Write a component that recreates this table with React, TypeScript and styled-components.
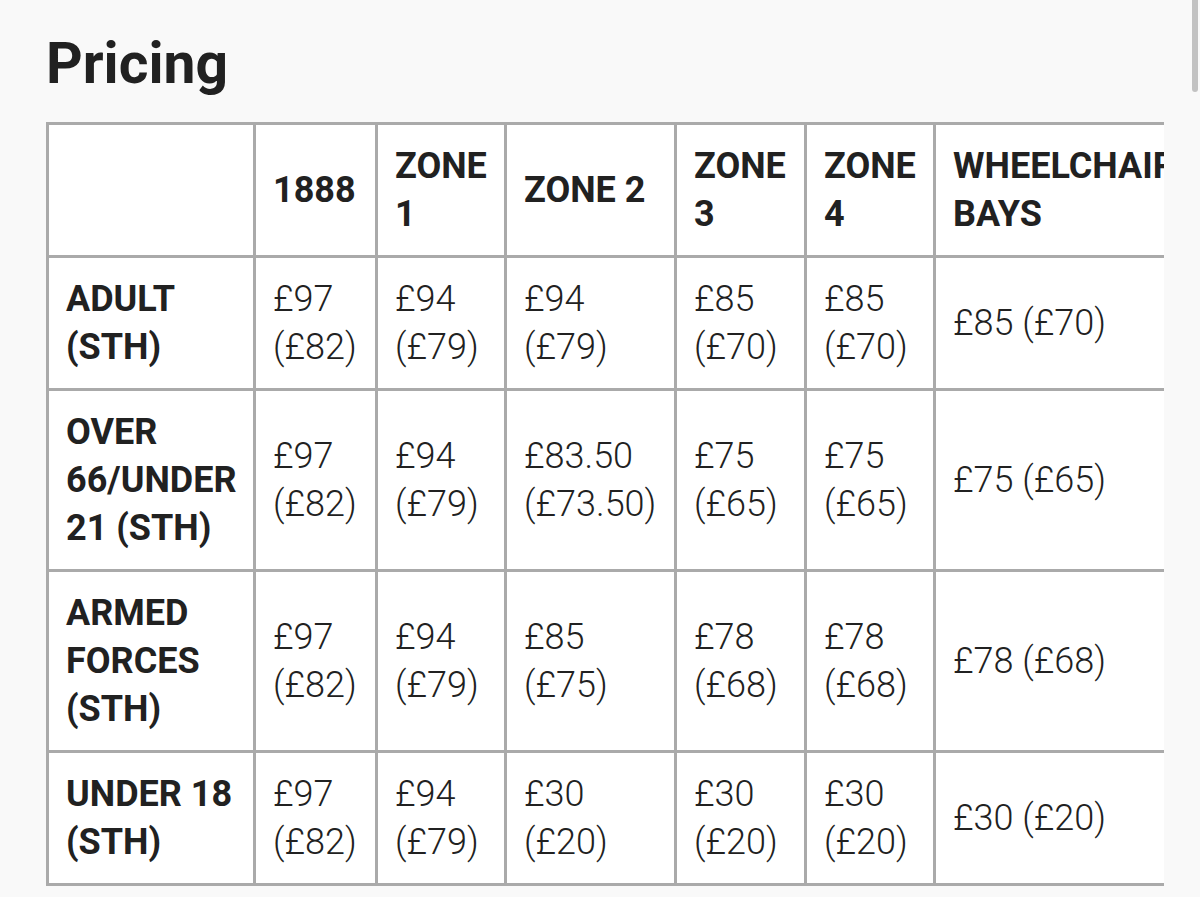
import React, {FunctionComponent} from 'react';
import styled, {createGlobalStyle} from 'styled-components';


const GlobalStyle = createGlobalStyle`
  html, body {
    margin: 0;
    padding: 0;
    background: #f9f9f9;
  }
  body {
    font-family: Roboto, "Liberation Sans", sans-serif;
    color: #212121;
    overflow: hidden;
  }
`;

const Page = styled.div`
  position: relative;
  height: 897px;
  padding: 32px 0 0 46px;
  box-sizing: border-box;
`;

const Title = styled.h1`
  margin: 0 0 26px;
  font-size: 57px;
  line-height: 64px;
  font-weight: 700;
`;

const ScrollBox = styled.div`
  width: 1118px;
  overflow: hidden;
`;

const Table = styled.table`
  table-layout: fixed;
  width: 1180px;
  border-collapse: separate;
  border-spacing: 0;
  border-top: 3px solid #aaaaaa;
  border-left: 3px solid #aaaaaa;
  background: #fff;
`;

const Cell = styled.td<{$head?: boolean}>`
  box-sizing: border-box;
  padding: 17px 17px;
  border-right: 3px solid #aaaaaa;
  border-bottom: 3px solid #aaaaaa;
  vertical-align: middle;
  text-align: left;
  font-size: 36px;
  line-height: 48px;
  font-weight: ${p => (p.$head ? 700 : 300)};
  color: #212121;
  white-space: normal;
`;

const ScrollThumb = styled.div`
  position: absolute;
  top: 0;
  right: 2px;
  width: 6px;
  height: 92px;
  border-radius: 0 0 3px 3px;
  background: #c2c2c2;
`;

interface PriceRow {
  label: string,
  prices: Array<string>,
  bays: string
}

const columns: Array<number> = [207, 122, 129, 170, 130, 129, 290];
const headings: Array<string> = ['', '1888', 'ZONE 1', 'ZONE 2', 'ZONE 3', 'ZONE 4', 'WHEELCHAIR BAYS'];

const rows: Array<PriceRow> = [
  {label: 'ADULT (STH)', prices: ['£97 (£82)', '£94 (£79)', '£94 (£79)', '£85 (£70)', '£85 (£70)'], bays: '£85 (£70)'},
  {label: 'OVER 66/UNDER 21 (STH)', prices: ['£97 (£82)', '£94 (£79)', '£83.50 (£73.50)', '£75 (£65)', '£75 (£65)'], bays: '£75 (£65)'},
  {label: 'ARMED FORCES (STH)', prices: ['£97 (£82)', '£94 (£79)', '£85 (£75)', '£78 (£68)', '£78 (£68)'], bays: '£78 (£68)'},
  {label: 'UNDER 18 (STH)', prices: ['£97 (£82)', '£94 (£79)', '£30 (£20)', '£30 (£20)', '£30 (£20)'], bays: '£30 (£20)'}
];

const App: FunctionComponent = () => {
  return (
    <>
      <GlobalStyle/>
      <Page>
        <Title>Pricing</Title>
        <ScrollBox>
          <Table>
            <colgroup>
              {columns.map((w, i) => <col key={i} style={{width: w}}/>)}
            </colgroup>
            <thead>
              <tr>
                {headings.map((h, i) => <Cell as="th" $head key={i}>{h}</Cell>)}
              </tr>
            </thead>
            <tbody>
              {rows.map(row => (
                <tr key={row.label}>
                  <Cell $head>{row.label}</Cell>
                  {row.prices.map((p, i) => <Cell key={i}>{p}</Cell>)}
                  <Cell>{row.bays}</Cell>
                </tr>
              ))}
            </tbody>
          </Table>
        </ScrollBox>
        <ScrollThumb/>
      </Page>
    </>
  );
}

export default App;
